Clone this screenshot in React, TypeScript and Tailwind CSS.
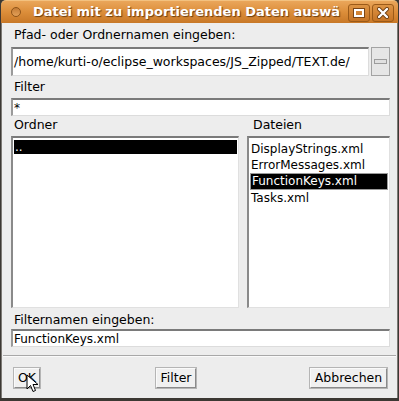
const font = { fontFamily: '"DejaVu Sans", sans-serif' }

function Field({ value, className }: { value: string; className: string }) {
  return (
    <div
      className={`flex items-center bg-white border-t-2 border-l-2 border-t-[#7a7a7a] border-l-[#9a9a9a] border-b border-r border-b-[#dcdcdc] border-r-[#dcdcdc] pl-[1px] text-black ${className}`}
    >
      {value}
    </div>
  )
}

function Btn({ label, className }: { label: string; className: string }) {
  return (
    <div
      className={`flex items-center justify-center h-[20px] bg-[#f0f0f0] border border-t-[#fafafa] border-l-[#fafafa] border-b-[#8a8a8a] border-r-[#8a8a8a] outline outline-1 outline-[#b5b5b5] text-[12.5px] text-black ${className}`}
    >
      {label}
    </div>
  )
}

export default function App() {
  return (
    <div
      style={font}
      className="w-[399px] h-[401px] bg-[#3c3833] p-[1px] pt-0 flex flex-col overflow-hidden"
    >
      {/* Title bar */}
      <div className="h-[23px] shrink-0 rounded-t-[5px] bg-gradient-to-b from-[#eaa65a] via-[#dc8e3a] to-[#c87827] border-t border-[#f3c17f] flex items-center relative">
        <div className="ml-[10px] w-[10px] h-[10px] rounded-full bg-gradient-to-b from-[#c47c35] to-[#e3a058] border border-[#8f5419]" />
        <div className="ml-[12px] text-[13px] font-bold text-white whitespace-nowrap [text-shadow:1px_1px_1px_#6b3c0f]">
          Datei mit zu importierenden Daten auswä
        </div>
        <div className="absolute right-[4px] top-[3px] flex gap-[2px]">
          <div className="w-[22px] h-[18px] rounded-[3px] border border-[#9b5a18] bg-gradient-to-b from-[#dd9444] to-[#c67424] flex items-center justify-center">
            <div className="w-[10px] h-[8px] border-2 border-white outline outline-1 outline-[#7a4515]" />
          </div>
          <div className="w-[22px] h-[18px] rounded-[3px] border border-[#9b5a18] bg-gradient-to-b from-[#dd9444] to-[#c67424] flex items-center justify-center">
            <svg width="12" height="12" viewBox="0 0 12 12">
              <path d="M2 2 L10 10 M10 2 L2 10" stroke="#6b3c0f" strokeWidth="4" strokeLinecap="round" />
              <path d="M2 2 L10 10 M10 2 L2 10" stroke="white" strokeWidth="2.4" strokeLinecap="round" />
            </svg>
          </div>
        </div>
      </div>

      {/* Body */}
      <div className="flex-1 bg-[#ededed] border-l border-r border-[#7d7a75] mb-[2px] flex flex-col text-[12px] text-black">
        <div className="pl-[12px] mt-[4px] h-[16px] leading-[16px] text-[12.5px]">Pfad- oder Ordnernamen eingeben:</div>
        <div className="flex mt-[4px] ml-[9px] mr-[7px] h-[29px] gap-[2px]">
          <Field value="/home/kurti-o/eclipse_workspaces/JS_Zipped/TEXT.de/" className="flex-1 text-[12.5px] whitespace-nowrap overflow-hidden" />
          <div className="w-[19px] bg-[#e6e6e6] border border-[#a3a3a3] flex items-center justify-center">
            <div className="w-[13px] h-[5px] border border-[#9c9c9c] bg-[#e0e0e0]" />
          </div>
        </div>

        <div className="pl-[12px] mt-[3px] h-[16px] leading-[16px] text-[12.5px]">Filter</div>
        <Field value="*" className="mt-[3px] ml-[9px] mr-[7px] h-[18px] text-[12px]" />

        <div className="flex mt-[1px] h-[16px] leading-[16px] text-[12.5px]">
          <div className="pl-[12px] w-[251px]">Ordner</div>
          <div>Dateien</div>
        </div>
        <div className="flex mt-[3px] ml-[9px] mr-[7px] h-[172px] gap-[8px]">
          <div className="w-[228px] bg-white border-t-2 border-l-2 border-t-[#7a7a7a] border-l-[#8a8a8a] border-b border-r border-b-[#e0e0e0] border-r-[#e0e0e0] pt-[2px] px-[1px]">
            <div className="h-[14px] bg-black text-white leading-[14px] text-[12px] pl-[1px]">..</div>
          </div>
          <div className="flex-1 bg-white border-t-2 border-l-2 border-t-[#7a7a7a] border-l-[#8a8a8a] border-b border-r border-b-[#e0e0e0] border-r-[#e0e0e0] pt-[3px] px-[1px] text-[12px] leading-[16px]">
            <div className="h-[16px] pl-[1px]">DisplayStrings.xml</div>
            <div className="h-[16px] pl-[1px]">ErrorMessages.xml</div>
            <div className="h-[17px] pl-[1px] bg-black text-white border border-[#9a9a9a] leading-[15px]">FunctionKeys.xml</div>
            <div className="h-[16px] pl-[1px]">Tasks.xml</div>
          </div>
        </div>

        <div className="pl-[12px] mt-[4px] h-[16px] leading-[16px] text-[12.5px]">Filternamen eingeben:</div>
        <Field value="FunctionKeys.xml" className="mt-[1px] ml-[9px] mr-[7px] h-[18px] text-[12px]" />

        <div className="mt-[8px] mx-[1px] h-[1px] bg-[#a8a8a8]" />
        <div className="h-[1px] mx-[1px] bg-[#fafafa]" />

        <div className="flex justify-between items-center mt-[11px] ml-[12px] mr-[10px] relative">
          <Btn label="OK" className="w-[26px]" />
          <Btn label="Filter" className="w-[40px] ml-[2px]" />
          <Btn label="Abbrechen" className="w-[77px]" />
          <svg className="absolute left-[12px] top-[6px]" width="14" height="20" viewBox="0 0 14 20">
            <path d="M1 1 L1 15 L4.5 11.5 L7 17.5 L9.5 16.5 L7 10.5 L12 10.5 Z" fill="white" stroke="black" strokeWidth="1" strokeLinejoin="round" />
          </svg>
        </div>
      </div>
    </div>
  )
}
